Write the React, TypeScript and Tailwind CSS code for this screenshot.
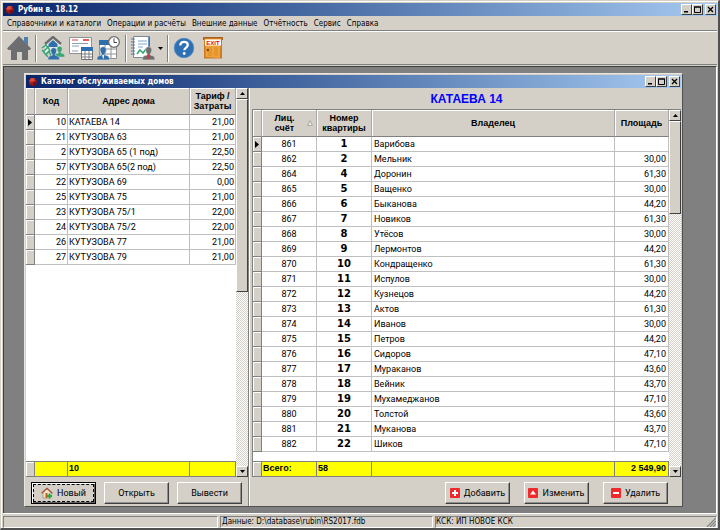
import type { ReactNode } from "react";

const RAISED =
  "border border-t-white border-l-white border-r-[#404040] border-b-[#404040] bg-[#d4d0c8]";

const HOUSES: [number, string, string][] = [
  [10, "КАТАЕВА 14", "21,00"],
  [21, "КУТУЗОВА 63", "21,00"],
  [2, "КУТУЗОВА 65 (1 под)", "22,50"],
  [57, "КУТУЗОВА 65(2 под)", "22,50"],
  [22, "КУТУЗОВА 69", "0,00"],
  [25, "КУТУЗОВА 75", "21,00"],
  [23, "КУТУЗОВА 75/1", "22,00"],
  [24, "КУТУЗОВА 75/2", "22,00"],
  [26, "КУТУЗОВА 77", "21,00"],
  [27, "КУТУЗОВА 79", "21,00"],
];

const FLATS: [number, number, string, string][] = [
  [861, 1, "Варибова", ""],
  [862, 2, "Мельник", "30,00"],
  [864, 4, "Доронин", "61,30"],
  [865, 5, "Ващенко", "30,00"],
  [866, 6, "Быканова", "44,20"],
  [867, 7, "Новиков", "61,30"],
  [868, 8, "Утёсов", "30,00"],
  [869, 9, "Лермонтов", "44,20"],
  [870, 10, "Кондращенко", "61,30"],
  [871, 11, "Испулов", "30,00"],
  [872, 12, "Кузнецов", "44,20"],
  [873, 13, "Актов", "61,30"],
  [874, 14, "Иванов", "30,00"],
  [875, 15, "Петров", "44,20"],
  [876, 16, "Сидоров", "47,10"],
  [877, 17, "Мураканов", "43,60"],
  [878, 18, "Вейник", "43,70"],
  [879, 19, "Мухамеджанов", "47,10"],
  [880, 20, "Толстой", "43,60"],
  [881, 21, "Муканова", "43,70"],
  [882, 22, "Шиков", "47,10"],
];

const MENU = [
  "Справочники и каталоги",
  "Операции и расчёты",
  "Внешние данные",
  "Отчётность",
  "Сервис",
  "Справка",
];

function Ruby() {
  return (
    <svg className="size-[10px]" viewBox="0 0 10 10">
      <path d="M3 1h4l2 3-1 4-3 1-4-2 0-3z" fill="#a01818" />
      <path d="M3 1h3l1 3-4 1-2-1z" fill="#d84a3c" />
      <path d="M5 6l3-1 0 3-3 1z" fill="#6b0d12" />
    </svg>
  );
}

function WindowButtons() {
  const box = `${RAISED} flex h-[11px] w-[11px] items-center justify-center`;
  return (
    <div className="flex">
      <button aria-label="Свернуть" className={box}>
        <svg className="size-[7px]" viewBox="0 0 7 7"><path d="M1 5h4v1.500H1z" /></svg>
      </button>
      <button aria-label="Развернуть" className={box}>
        <svg className="size-[7px]" viewBox="0 0 7 7"><path d="M.5 1h6v5.500h-6z" fill="none" stroke="#000" /><path d="M0 .5h7v1H0z" /></svg>
      </button>
      <button aria-label="Закрыть" className={`${box} ml-[2px]`}>
        <svg className="size-[7px]" viewBox="0 0 7 7"><path d="M1 1l5 5M6 1l-5 5" stroke="#000" strokeWidth="1.300" /></svg>
      </button>
    </div>
  );
}

function TitleBar({ title }: { title: string }) {
  return (
    <header className="flex h-[13px] shrink-0 items-center gap-[3px] bg-linear-to-r from-[#0a246a] to-[#a6caf0] pr-px pl-[2px] text-white">
      <Ruby />
      <h1 className="flex-1 font-['DejaVu_Sans_Condensed','Liberation_Sans',sans-serif] text-[8px] font-bold whitespace-nowrap">{title}</h1>
      <WindowButtons />
    </header>
  );
}

function ScrollBar({ thumb }: { thumb: string }) {
  const button = `${RAISED} flex h-[11px] shrink-0 items-center justify-center`;
  return (
    <div className="flex w-[12px] shrink-0 flex-col bg-[repeating-conic-gradient(#fff_0_25%,#d4d0c8_0_50%)] bg-[size:2px_2px]">
      <button aria-label="Вверх" className={button}>
        <svg className="h-[3px] w-[5px]" viewBox="0 0 5 3"><path d="M0 3L2.500 0 5 3z" /></svg>
      </button>
      <div className={`${RAISED} ${thumb}`} />
      <div className="flex-1" />
      <button aria-label="Вниз" className={button}>
        <svg className="h-[3px] w-[5px]" viewBox="0 0 5 3"><path d="M0 0L2.500 3 5 0z" /></svg>
      </button>
    </div>
  );
}

const HEAD =
  "border-r border-b border-r-[#a8a8a8] border-b-[#808080] bg-[#d4d0c8] p-0 text-center font-['Liberation_Sans',sans-serif] leading-[10px] font-bold shadow-[inset_1px_1px_0_#fff]";
const CELL = "h-[15px] border-r border-b border-[#c0c0c0] p-0 leading-[14px] whitespace-nowrap";
const MARK =
  "h-[15px] border-r border-b border-r-[#808080] border-b-[#808080] bg-[#d4d0c8] p-0 shadow-[inset_1px_1px_0_#fff]";
const FOOT =
  "h-[15px] border-y border-r border-[#808080] bg-[#ffff00] py-0 text-left align-top font-['Liberation_Sans',sans-serif] leading-[12px] font-bold";

function RowMark({ current }: { current: boolean }) {
  return (
    <td className={MARK}>
      {current && (
        <svg className="mx-auto block h-[7px] w-[4px]" viewBox="0 0 4 7"><path d="M0 0l4 3.500L0 7z" /></svg>
      )}
    </td>
  );
}

function HousesTable() {
  return (
    <table className="h-full w-full table-fixed border-separate border-spacing-0 bg-white">
      <colgroup>
        <col className="w-[9px]" />
        <col className="w-[33px]" />
        <col />
        <col className="w-[46px]" />
      </colgroup>
      <thead>
        <tr className="h-[27px]">
          <th className={HEAD} />
          <th className={HEAD}>Код</th>
          <th className={HEAD}>Адрес дома</th>
          <th className={HEAD}>Тариф /<br />Затраты</th>
        </tr>
      </thead>
      <tbody>
        {HOUSES.map(([code, address, rate], i) => (
          <tr key={code} className="h-[15px]">
            <RowMark current={i === 0} />
            <td className={`${CELL} pr-px text-right`}>{code}</td>
            <td className={`${CELL} pl-px`}>{address}</td>
            <td className={`${CELL} pr-px text-right`}>{rate}</td>
          </tr>
        ))}
        <tr><td colSpan={4} className="p-0" /></tr>
      </tbody>
      <tfoot>
        <tr className="h-[16px]">
          <td className={`${MARK} border-t border-t-[#808080]`} />
          <td className={FOOT} />
          <td className={`${FOOT} pl-px`}>10</td>
          <td className={FOOT} />
        </tr>
      </tfoot>
    </table>
  );
}

function FlatsTable() {
  return (
    <table className="h-full w-full table-fixed border-separate border-spacing-0 bg-white">
      <colgroup>
        <col className="w-[9px]" />
        <col className="w-[55px]" />
        <col className="w-[55px]" />
        <col />
        <col className="w-[54px]" />
      </colgroup>
      <thead>
        <tr className="h-[27px]">
          <th className={HEAD} />
          <th className={HEAD}>
            <span className="flex items-center pr-[3px]">
              <span className="flex-1">Лиц.<br />счёт</span>
              <svg className="size-[6px]" viewBox="0 0 6 6"><path d="M3 .5L.5 5.500h5z" fill="#e8e6e0" stroke="#a0a0a0" strokeWidth=".8" /></svg>
            </span>
          </th>
          <th className={HEAD}>Номер<br />квартиры</th>
          <th className={HEAD}>Владелец</th>
          <th className={HEAD}>Площадь</th>
        </tr>
      </thead>
      <tbody>
        {FLATS.map(([account, flat, owner, area], i) => (
          <tr key={account} className="h-[15px]">
            <RowMark current={i === 0} />
            <td className={`${CELL} text-center`}>{account}</td>
            <td className={`${CELL} text-center font-['DejaVu_Sans',sans-serif] text-[10px] font-bold`}>{flat}</td>
            <td className={`${CELL} pl-[2px]`}>{owner}</td>
            <td className={`${CELL} pr-[2px] text-right`}>{area}</td>
          </tr>
        ))}
        <tr><td colSpan={5} className="p-0" /></tr>
      </tbody>
      <tfoot>
        <tr className="h-[16px]">
          <td className={`${MARK} border-t border-t-[#808080]`} />
          <td className={`${FOOT} pl-px`}>Всего:</td>
          <td className={`${FOOT} pl-px`}>58</td>
          <td className={FOOT} />
          <td className={`${FOOT} pr-[2px] text-right`}>2 549,90</td>
        </tr>
      </tfoot>
    </table>
  );
}

function PushButton({ label, icon, focused }: { label: string; icon?: ReactNode; focused?: boolean }) {
  return (
    <button
      className={
        focused
          ? "h-[22px] w-[65px] border border-black bg-[#d4d0c8] p-px shadow-[inset_1px_1px_0_#fff,inset_-1px_-1px_0_#606060]"
          : "h-[22px] w-[65px] border border-t-white border-l-white border-r-[#404040] border-b-[#404040] bg-[#d4d0c8] p-px shadow-[inset_-1px_-1px_0_#909090]"
      }
    >
      <span
        className={`flex h-full items-center justify-center gap-[4px] ${focused ? "border border-dashed border-black" : ""}`}
      >
        {icon}
        {label}
      </span>
    </button>
  );
}

function RedIcon({ d }: { d: string }) {
  return (
    <svg className="size-[10px]" viewBox="0 0 10 10">
      <rect width="10" height="10" rx="1" fill="#ee2a2a" />
      <path d={d} fill="#fff" />
    </svg>
  );
}

function NewHouseIcon() {
  return (
    <svg className="size-[12px]" viewBox="0 0 12 12">
      <path d="M2 5.500L6 2l4 3.500V11H2z" fill="#f2e2cf" stroke="#9a8068" strokeWidth=".6" />
      <path d="M.6 6.200L6 1.200l5.400 5" fill="none" stroke="#a0522d" strokeWidth="1.200" />
      <path d="M4.500 6h2v5h-2z" fill="#b5651d" />
      <path d="M8.500 6.500v5M6 9h5" stroke="#1fae3a" strokeWidth="1.800" />
    </svg>
  );
}

function Person({ x, y, color, s = 1 }: { x: number; y: number; color: string; s?: number }) {
  return (
    <g transform={`translate(${x} ${y}) scale(${s})`}>
      <path d="M3 3.200a3 3 0 0 1 6 0c0 1.700-.9 3.500-1.600 4l.1 1 3 1c1 .4 1.500 1.300 1.500 3.800H0c0-2.500.5-3.400 1.500-3.800l3-1 .1-1C3.900 6.700 3 4.900 3 3.200z" fill={color} stroke="#d4d0c8" strokeWidth=".6" />
    </g>
  );
}

function HomeIcon() {
  return (
    <svg className="size-6" viewBox="0 0 24 24">
      <path d="M12 0L0 12.500l1.500 1.500H4v10h6v-8h5v8h6V14h2l1-1.500-3-3V1h-4v4z" fill="#6d6e70" />
      <path d="M17 1h4v8.500l-4-4z" fill="#4d80b4" />
    </svg>
  );
}

function ResidentsIcon() {
  return (
    <svg className="size-6" viewBox="0 0 24 24">
      <path d="M4 9.500L12 3l8 6.500V17H4z" fill="#e8eceb" />
      <path d="M4 8L12 1l8 7" fill="none" stroke="#6d6e70" strokeWidth="2.400" />
      <path d="M7.500 8L12 4l4.500 4v3h-9z" fill="#2f6fae" />
      <path d="M1 12l4-3 3 4M2 16l5-5 2 4-5 4M4 19l4-4 2 5M1 14l6 7" fill="none" stroke="#35a674" strokeWidth="1.400" />
      <Person x={13.500} y={10} color="#35a674" s={0.85} />
      <Person x={7} y={11.500} color="#2f6fae" s={0.95} />
    </svg>
  );
}

function InvoiceIcon() {
  return (
    <svg className="size-6" viewBox="0 0 24 24">
      <path d="M.5 1.500h22v16H.5z" fill="#fff" stroke="#8e9092" />
      <path d="M14 4h6" stroke="#e03030" strokeWidth="1.600" />
      <path d="M3 4h6" stroke="#e06060" strokeWidth="1.200" />
      <path d="M3 7.500h16M3 10h7M3 15h6" stroke="#8ba0b5" />
      <path d="M12.500 11.500h11v12h-11z" fill="#fff" stroke="#6d6e70" />
      <path d="M12 11h12v4H12z" fill="#2f6fae" />
      <path d="M12.500 18h11M12.500 21h11M16 15v8M20 15v8" stroke="#7b7d80" />
    </svg>
  );
}

function ScheduleIcon() {
  return (
    <svg className="size-6" viewBox="0 0 24 24">
      <path d="M2.500 4.500h17v18h-17z" fill="#fff" stroke="#8e9092" />
      <path d="M2 4h12v5H2z" fill="#2f6fae" />
      <path d="M2.500 13h17M2.500 18h17M8 9v13M14 9v13" stroke="#8e9092" />
      <circle cx="17" cy="6" r="5.300" fill="#fff" stroke="#6d6e70" strokeWidth="1.300" />
      <path d="M17 2.500V6.500h3" fill="none" stroke="#444" />
      <Person x={0} y={10.500} color="#2f6fae" s={1.030} />
      <path d="M6.200 18.500l-1 1 1 4 1-4z" fill="#fff" />
    </svg>
  );
}

function ReportIcon() {
  return (
    <svg className="size-6" viewBox="0 0 24 24">
      <path d="M2.500.5h16v21h-16z" fill="#fff" stroke="#7b8894" />
      <path d="M18 1v12" stroke="#2f6fae" strokeWidth="1.500" />
      <path d="M0 3h4M0 6h4M0 9h4M0 12h4M0 15h4M0 18h4" stroke="#54789a" />
      <path d="M7 5h9M7 8h9M7 11h5" stroke="#7fa6cc" />
      <path d="M6 18l3-4 3 3 3-4" fill="none" stroke="#35a674" strokeWidth="1.600" />
      <Person x={11.500} y={10.500} color="#6d6e70" s={1.030} />
      <path d="M17.700 18.500l-1 1 1 4 1-4z" fill="#e03030" />
    </svg>
  );
}

function HelpIcon() {
  return (
    <svg className="size-[22px]" viewBox="0 0 22 22">
      <circle cx="11" cy="11" r="9.800" fill="#2f70b4" stroke="#5c8fc4" />
      <path d="M7.300 8.500c0-2.300 1.600-3.600 3.800-3.600s3.700 1.300 3.700 3.100c0 2.400-3.500 2.700-3.500 5.300" fill="none" stroke="#fff" strokeWidth="2.200" />
      <circle cx="11.200" cy="16.500" r="1.400" fill="#fff" />
    </svg>
  );
}

function ExitIcon() {
  return (
    <svg className="h-[22px] w-5" viewBox="0 0 20 22">
      <path d="M0 0h20v3H0z" fill="#a8601c" />
      <path d="M1 1h18v20.500H1z" fill="#c97a22" />
      <path d="M2.500 2h15l-.5 19L2.500 20z" fill="#efa23c" />
      <path d="M5 10h4v9H5zM11 10h4v9h-4z" fill="#e5962f" />
      <rect x="2" y="2.500" width="16" height="6" fill="#fff" />
      <text x="10" y="7.500" textAnchor="middle" fill="#e01010" className="font-['Liberation_Sans',sans-serif] text-[6px] font-bold">EXIT</text>
      <circle cx="4.800" cy="13" r="1.200" fill="#7a4410" />
    </svg>
  );
}

function Separator() {
  return <span className="h-[27px] w-[2px] border-r border-l border-r-white border-l-[#808080]" />;
}

function ToolButton({ label, children }: { label: string; children: ReactNode }) {
  return <button aria-label={label} className="shrink-0">{children}</button>;
}

export default function App() {
  return (
    <div className="flex h-screen flex-col border-t border-r-2 border-b-2 border-l border-t-[#d4d0c8] border-r-[#505050] border-b-[#505050] border-l-[#d4d0c8] bg-[#d4d0c8] font-[Roboto,'Liberation_Sans',sans-serif] text-[9px] leading-[11px] text-black">
      <div className="flex min-h-0 flex-1 flex-col border-t border-l border-white pt-px pr-px pl-px">
        <TitleBar title="Рубин в. 18.12" />
        <nav className="flex h-[15px] shrink-0 items-center gap-[6px] border-b border-[#808080] pl-[4px] font-['DejaVu_Sans_Condensed','Liberation_Sans',sans-serif] text-[8px]">
          {MENU.map((item) => (
            <a key={item} href="#" className="whitespace-nowrap">{item}</a>
          ))}
        </nav>
        <div className="flex h-[34px] shrink-0 items-center gap-[4px] border-t border-b border-t-white border-b-[#808080] pl-[4px]">
          <ToolButton label="Главная"><HomeIcon /></ToolButton>
          <Separator />
          <ToolButton label="Дома и жильцы"><ResidentsIcon /></ToolButton>
          <ToolButton label="Квитанции"><InvoiceIcon /></ToolButton>
          <ToolButton label="График"><ScheduleIcon /></ToolButton>
          <Separator />
          <div className="flex items-center gap-[2px]">
            <ToolButton label="Отчёты"><ReportIcon /></ToolButton>
            <button aria-label="Список отчётов" className="flex w-[6px] items-center justify-center self-stretch">
              <svg className="h-[3px] w-[5px]" viewBox="0 0 5 3"><path d="M0 0L2.500 3 5 0z" /></svg>
            </button>
          </div>
          <Separator />
          <div className="flex gap-[8px]">
            <ToolButton label="Помощь"><HelpIcon /></ToolButton>
            <ToolButton label="Выход"><ExitIcon /></ToolButton>
          </div>
        </div>

        <main className="mt-px flex min-h-0 flex-1 border-t border-r border-l border-t-[#404040] border-r-white border-l-[#404040] bg-[#808080] pt-[6px] pr-[33px] pb-[6px] pl-[20px]">
          <section className="flex min-w-0 flex-1 flex-col border border-t-[#e8e6e0] border-r-[#505050] border-b-[#505050] border-l-[#e8e6e0] bg-[#d4d0c8] pt-px pr-px pl-px">
            <TitleBar title="Каталог обслуживаемых домов" />
            <div className="flex min-h-0 flex-1">
              <div className="flex w-[223px] shrink-0 flex-col border-r border-[#808080]">
                <div className="flex min-h-0 flex-1">
                  <div className="min-w-0 flex-1"><HousesTable /></div>
                  <ScrollBar thumb="h-[193px]" />
                </div>
                <div className="flex gap-[8px] pt-[5px] pb-[2px] pl-[5px]">
                  <PushButton label="Новый" icon={<NewHouseIcon />} focused />
                  <PushButton label="Открыть" />
                  <PushButton label="Вывести" />
                </div>
              </div>
              <div className="flex min-w-0 flex-1 flex-col border-l border-white pl-[2px]">
                <h2 className="h-[21px] shrink-0 text-center font-['Liberation_Sans',sans-serif] text-[12px] leading-[22px] font-bold text-[#0000ff]">КАТАЕВА 14</h2>
                <div className="flex min-h-0 flex-1 border-t border-l border-[#808080]">
                  <div className="min-w-0 flex-1"><FlatsTable /></div>
                  <ScrollBar thumb="h-[93px]" />
                </div>
                <div className="flex justify-end gap-[14px] pt-[5px] pr-[13px] pb-[2px]">
                  <PushButton label="Добавить" icon={<RedIcon d="M4 2h2v2h2v2H6v2H4V6H2V4h2z" />} />
                  <PushButton label="Изменить" icon={<RedIcon d="M5 2.500l3 4H2z" />} />
                  <PushButton label="Удалить" icon={<RedIcon d="M2 4h6v2H2z" />} />
                </div>
              </div>
            </div>
          </section>
        </main>

        <footer className="flex h-[15px] shrink-0 gap-[2px] border-t border-white pt-[2px] font-['DejaVu_Sans_Condensed','Liberation_Sans',sans-serif] text-[8px] leading-[10px]">
          <span className="w-[215px] shrink-0 border border-t-[#808080] border-r-white border-b-white border-l-[#808080]" />
          <span className="w-[213px] shrink-0 border border-t-[#808080] border-r-white border-b-white border-l-[#808080] pl-px">
            Данные: D:\database\rubin\RS2017.fdb
          </span>
          <span className="flex flex-1 justify-between border border-t-[#808080] border-r-white border-b-white border-l-[#808080]">
            КСК: ИП НОВОЕ КСК
            <svg className="size-[10px] self-end" viewBox="0 0 10 10"><path d="M1 10l9-9M4 10l6-6M7 10l3-3" stroke="#808080" strokeWidth="1.200" /></svg>
          </span>
        </footer>
      </div>
    </div>
  );
}
